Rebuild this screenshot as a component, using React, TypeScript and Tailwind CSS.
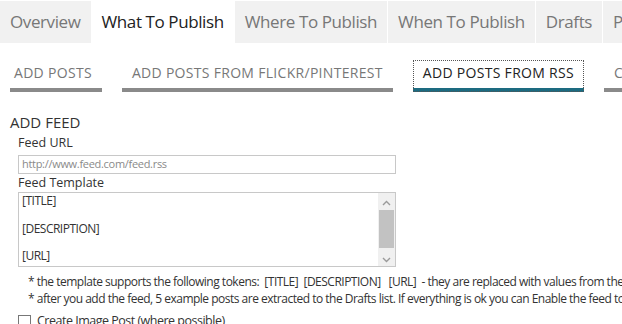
import React from "react";

const font = { fontFamily: '"Open Sans", "Noto Sans", sans-serif' };

export default function App() {
  const tabs = ["Overview", "What To Publish", "Where To Publish", "When To Publish", "Drafts", "Preview"];
  const subTabs = ["ADD POSTS", "ADD POSTS FROM FLICKR/PINTEREST", "ADD POSTS FROM RSS", "CUSTOM"];

  return (
    <div className="w-[622px] h-[324px] overflow-hidden bg-white text-[#333]" style={font}>
      {/* main tabs */}
      <div className="mt-[1px] flex gap-[1px] whitespace-nowrap">
        {tabs.map((t, i) => (
          <div
            key={t}
            className={`h-[42px] flex items-center px-[10px] text-[17px] tracking-[-0.4px] shrink-0 ${
              i === 1 ? "bg-white text-[#222]" : "bg-[#f1f1f1] text-[#777]"
            }`}
          >
            {t}
          </div>
        ))}
      </div>

      {/* sub tabs */}
      <div className="mt-[17px] ml-[10px] flex gap-[20px] whitespace-nowrap">
        {subTabs.map((t, i) => (
          <div
            key={t}
            className={`shrink-0 pt-[2px] pb-[5px] text-[14px] tracking-[0.3px] border-b-4 ${i === 0 ? "pl-[4px] pr-[10px]" : "px-[10px]"} ${
              i === 2
                ? "border-[#1d6b80] text-[#222] outline-1 outline-dotted outline-[#555] -outline-offset-1"
                : "border-[#8a8a8a] text-[#777]"
            }`}
          >
            {t}
          </div>
        ))}
      </div>

      {/* add feed */}
      <div className="pl-[10px] pt-[20px]">
        <div className="text-[15px] leading-[20px] text-[#333]">ADD FEED</div>
        <div className="pl-[8px]">
          <div className="text-[12.5px] leading-[17px] mt-[2px] text-[#333]">Feed URL</div>
          <div className="mt-[4px] w-[378px] h-[19px] border border-[#c8c8c8] flex items-center pl-[3px] text-[11px] text-[#8a8a8a] tracking-[-0.3px]">
            http://www.feed.com/feed.rss
          </div>
          <div className="text-[12.5px] leading-[17px] text-[#333]">Feed Template</div>
          <div className="mt-[1px] w-[378px] h-[75px] border border-[#c8c8c8] flex">
            <div className="flex-1 pl-[3px] pt-[1px] text-[12px] leading-[13.75px] text-[#333] tracking-[-0.5px]">
              <div>[TITLE]</div>
              <div>&nbsp;</div>
              <div>[DESCRIPTION]</div>
              <div>&nbsp;</div>
              <div>[URL]</div>
            </div>
            <div className="w-[17px] bg-[#f0f0f0] flex flex-col items-center">
              <svg width="9" height="6" viewBox="0 0 9 6" className="mt-[7px]">
                <path d="M1 5 L4.5 1.5 L8 5" fill="none" stroke="#9a9a9a" strokeWidth="1.4" />
              </svg>
              <div className="mt-[4px] w-[15px] h-[38px] bg-[#c2c2c2]" />
              <svg width="9" height="6" viewBox="0 0 9 6" className="mt-[9px]">
                <path d="M1 1 L4.5 4.5 L8 1" fill="none" stroke="#9a9a9a" strokeWidth="1.4" />
              </svg>
            </div>
          </div>
          <div className="pl-[10px] mt-[6px] text-[12px] leading-[17px] text-[#333] whitespace-nowrap tracking-[-0.5px]">
            <div>* the template supports the following tokens:&nbsp; [TITLE]&nbsp; [DESCRIPTION]&nbsp;&nbsp; [URL]&nbsp; - they are replaced with values from the feed</div>
            <div>* after you add the feed, 5 example posts are extracted to the Drafts list. If everything is ok you can Enable the feed to extract</div>
          </div>
          <label className="mt-[5px] flex items-center gap-[6px] text-[12.5px] text-[#333] whitespace-nowrap tracking-[-0.5px]">
            <span className="w-[13px] h-[13px] border border-[#777] bg-white inline-block" />
            Create Image Post (where possible)
          </label>
        </div>
      </div>
    </div>
  );
}
